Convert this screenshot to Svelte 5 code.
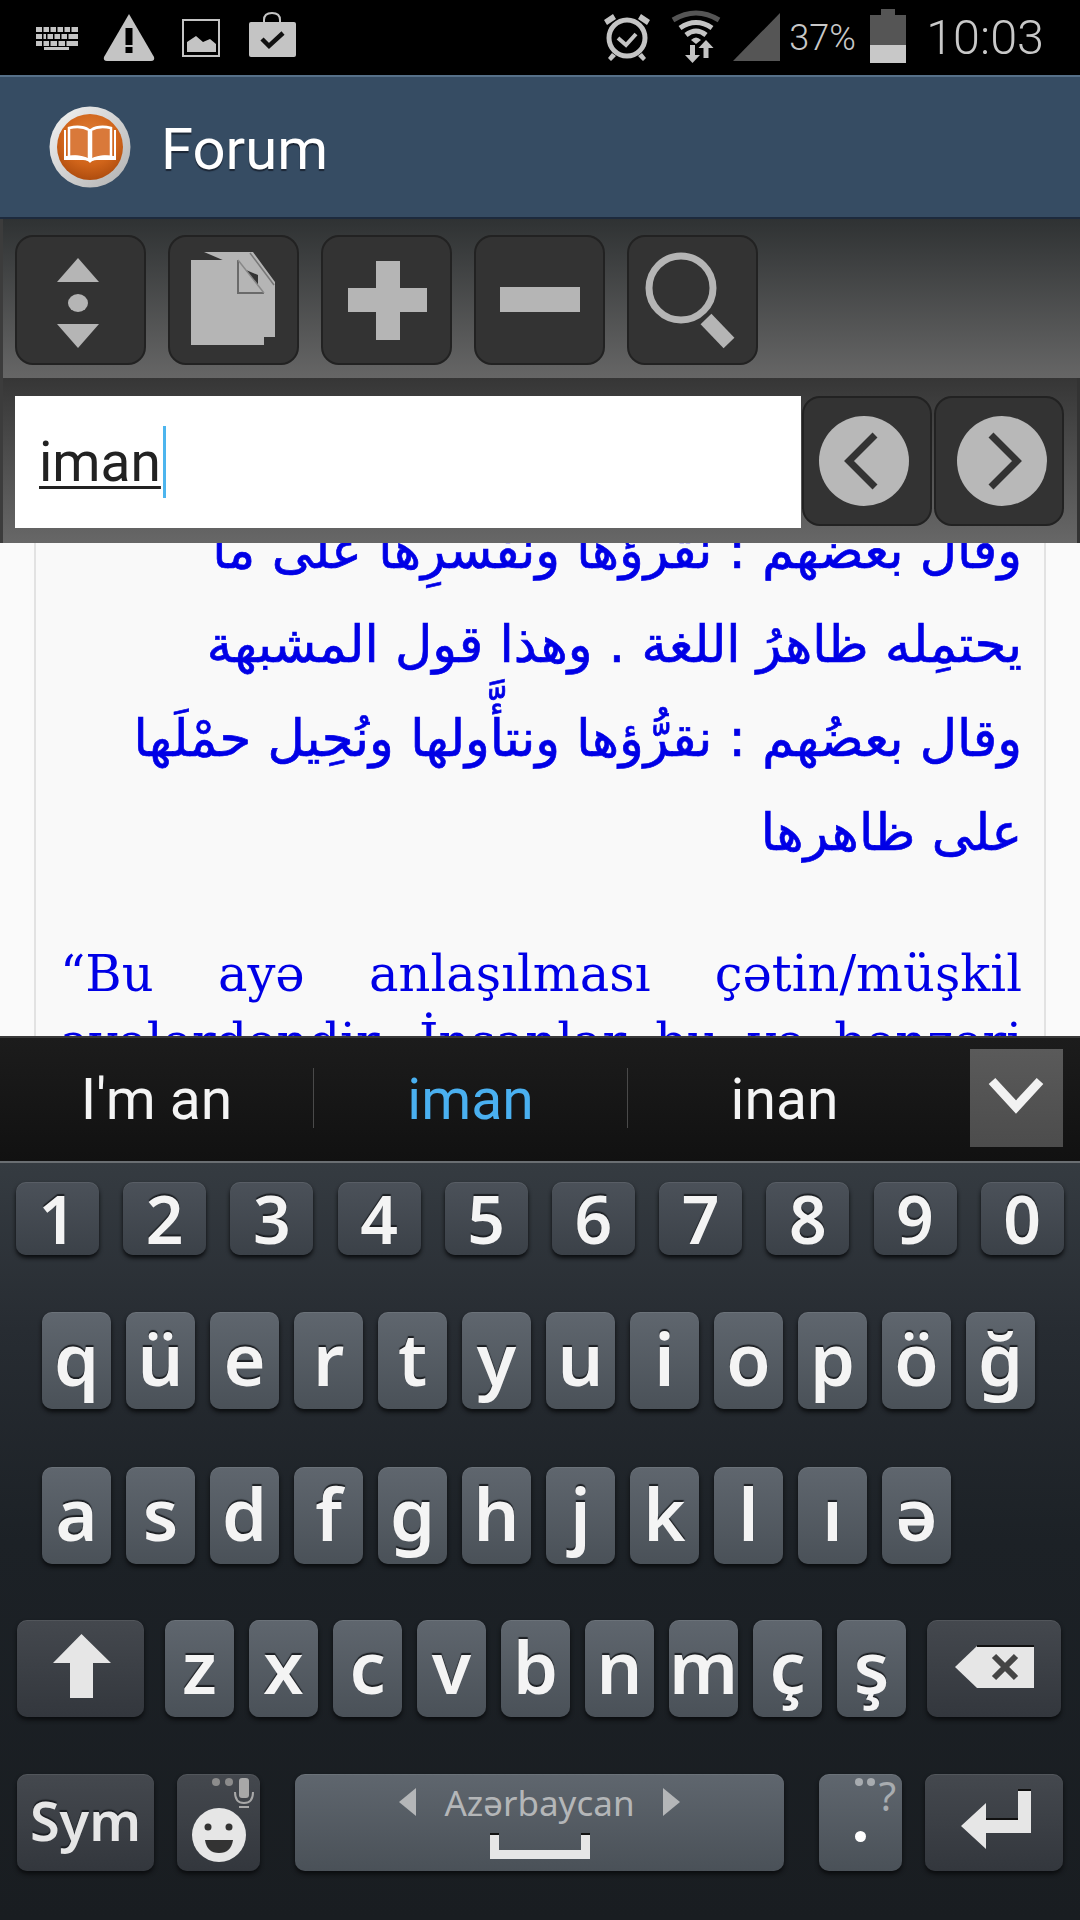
<script>
	const digits = ['1', '2', '3', '4', '5', '6', '7', '8', '9', '0'];
	const row2 = ['q', 'ü', 'e', 'r', 't', 'y', 'u', 'i', 'o', 'p', 'ö', 'ğ'];
	const row3 = ['a', 's', 'd', 'f', 'g', 'h', 'j', 'k', 'l', 'ı', 'ə'];
	const row4 = ['z', 'x', 'c', 'v', 'b', 'n', 'm', 'ç', 'ş'];
	const tools = ['updown', 'copy', 'plus', 'minus', 'search'];
</script>

<div class="phone">
	<div class="status">
		<div class="status-left">
			<svg class="si" width="42" height="75" viewBox="0 0 42 75">
				<g fill="#c4c4c4">
					<path d="M0 27h42v5H0zM0 34h42v5H0zM0 41h42v5H0z" />
					<rect x="8" y="47" width="25" height="3" />
				</g>
				<g fill="#000">
					<path d="M6 27h1.500v19H6zM13 27h1.500v5H13zM20 27h1.500v5H20zM27 27h1.500v5H27zM34 27h1.500v5H34z" />
					<path d="M10 34h1.500v5H10zM17 34h1.500v5H17zM24 34h1.500v5H24zM31 34h1.500v5H31z" />
					<path d="M13 41h1.500v5H13zM21 41h1.500v5H21zM29 41h1.500v5H29z" />
				</g>
			</svg>
			<svg class="si warn" width="52" height="75" viewBox="0 0 52 75">
				<path d="M26 14 51 57q1 4-3 4H4q-4 0-3-4z" fill="#c4c4c4" />
				<rect x="22.500" y="28" width="7" height="17" fill="#000" />
				<rect x="22.500" y="47" width="7" height="6" fill="#000" />
			</svg>
			<svg class="si pic" width="38" height="75" viewBox="0 0 38 75">
				<rect x="1" y="20" width="36" height="36" fill="none" stroke="#c4c4c4" stroke-width="2" />
				<path d="M5 52V42l9-6 7 6 7-3 6 5v8z" fill="#c4c4c4" />
			</svg>
			<svg class="si bag" width="47" height="75" viewBox="0 0 47 75">
				<path d="M2 22h43q2 0 2 2v31q0 2-2 2H2q-2 0-2-2V24q0-2 2-2z" fill="#c4c4c4" />
				<path d="M15 23v-3q0-7 8-7t8 7v3" fill="none" stroke="#c4c4c4" stroke-width="2" />
				<path d="M13 39l7 7 14-13" fill="none" stroke="#111" stroke-width="4.500" />
			</svg>
		</div>
		<div class="status-right">
			<svg class="si" width="48" height="75" viewBox="0 0 48 75">
				<circle cx="24" cy="38" r="18" fill="none" stroke="#c4c4c4" stroke-width="5" />
				<path d="M15 38l8 7 10-11" fill="none" stroke="#c4c4c4" stroke-width="4" />
				<path d="M1 20 10 14 13 19 4 25zM47 20 38 14 35 19 44 25z" fill="#c4c4c4" />
				<path d="M9 53 5 58 8 61 13 56zM39 53 43 58 40 61 35 56z" fill="#c4c4c4" />
			</svg>
			<svg class="si wifi" width="50" height="75" viewBox="0 0 50 75">
				<path d="M2 20Q25 6 48 20" fill="none" stroke="#555" stroke-width="5" />
				<path d="M9 28Q25 17 41 28" fill="none" stroke="#c4c4c4" stroke-width="5" />
				<path d="M15 35Q25 27 35 35" fill="none" stroke="#c4c4c4" stroke-width="5" />
				<path d="M20 40Q25 35 30 40L25 44z" fill="#c4c4c4" />
				<path d="M19 45h5v10h5l-7.500 8-7.500-8h5z" fill="#c4c4c4" />
				<path d="M35 40l7.500 8h-5v10h-5V48h-5z" fill="#c4c4c4" />
			</svg>
			<svg class="si signal" width="47" height="75" viewBox="0 0 47 75">
				<path d="M47 13v48H0z" fill="#555" />
			</svg>
			<span class="pct">37%</span>
			<svg class="si batt" width="36" height="75" viewBox="0 0 36 75">
				<path d="M11 9h14v6h11v48H0V15h11z" fill="#555" />
				<rect y="45" width="36" height="18" fill="#c8c8c8" />
			</svg>
			<span class="time">10:03</span>
		</div>
	</div>

	<header class="appbar">
		<svg class="logo" width="82" height="82" viewBox="0 0 82 82">
			<defs>
				<radialGradient id="orange" cx="50%" cy="35%" r="70%">
					<stop offset="0" stop-color="#e08038" />
					<stop offset="0.6" stop-color="#d0641a" />
					<stop offset="1" stop-color="#a8480c" />
				</radialGradient>
				<linearGradient id="silver" x1="0" y1="0" x2="1" y2="1">
					<stop offset="0" stop-color="#f4f4f4" />
					<stop offset="1" stop-color="#b0b0b0" />
				</linearGradient>
			</defs>
			<circle cx="41" cy="41" r="40.500" fill="url(#silver)" />
			<circle cx="41" cy="41" r="33" fill="url(#orange)" />
			<path d="M20 22q12-3 20 2v30q-9-5-20-3zM62 22q-12-3-20 2v30q9-5 20-3z" fill="#d9793a" stroke="#fff" stroke-width="2.500" />
			<path d="M17 24h-2v30h19q5 0 7 3 2-3 7-3h19V24h-2v26q-14-2-24 4-10-6-24-4z" fill="#fff" />
		</svg>
		<span class="title">Forum</span>
	</header>

	<div class="toolbar">
		{#each tools as t}
			<div class="tbtn">
				{#if t === 'updown'}
					<svg width="131" height="130" viewBox="0 0 131 130" fill="#b5b5b5">
						<path d="M42 47 63 23l21 24z" />
						<ellipse cx="63" cy="68" rx="10" ry="9" />
						<path d="M42 89h42l-21 24z" />
					</svg>
				{:else if t === 'copy'}
					<svg width="131" height="130" viewBox="0 0 131 130">
						<path d="M36 17h49l22 30v55H90V40z" fill="#b5b5b5" />
						<path d="M23 25h47l26 33v52H23z" fill="#b5b5b5" />
						<path d="M70 25v33h26" fill="none" stroke="#6a6a6a" stroke-width="2" />
						<path d="M70 25l26 33" fill="none" stroke="#888" stroke-width="1.500" />
						<path d="M82 18l24 32" fill="none" stroke="#777" stroke-width="1.500" />
					</svg>
				{:else if t === 'plus'}
					<svg width="131" height="130" viewBox="0 0 131 130">
						<path d="M55 26h24v27h27v24H79v28H55V77H27V53h28z" fill="#b5b5b5" />
					</svg>
				{:else if t === 'minus'}
					<svg width="131" height="130" viewBox="0 0 131 130">
						<rect x="26" y="52" width="80" height="25" fill="#b5b5b5" />
					</svg>
				{:else}
					<svg width="131" height="130" viewBox="0 0 131 130">
						<circle cx="54" cy="53" r="32" fill="none" stroke="#b5b5b5" stroke-width="7" />
						<path d="M79 84l23 24" fill="none" stroke="#b5b5b5" stroke-width="15" />
					</svg>
				{/if}
			</div>
		{/each}
	</div>

	<div class="searchrow">
		<div class="field"><span class="typed">iman</span><i class="caret"></i></div>
		<div class="navbtn">
			<svg width="130" height="130" viewBox="0 0 130 130">
				<circle cx="62" cy="65" r="45" fill="#b8b8b8" />
				<path d="M73 39 47 65l26 26" fill="none" stroke="#333" stroke-width="7" />
			</svg>
		</div>
		<div class="navbtn">
			<svg width="130" height="130" viewBox="0 0 130 130">
				<circle cx="68" cy="65" r="45" fill="#b8b8b8" />
				<path d="M57 39l26 26-26 26" fill="none" stroke="#333" stroke-width="7" />
			</svg>
		</div>
	</div>

	<main class="content">
		<article>
			<p class="ar" dir="rtl">وقال بعضهم : نقرؤها ونفسرِها على ما<br />يحتمِله ظاهرُ اللغة . وهذا قول المشبهة<br />وقال بعضُهم : نقرُّؤها ونتأَّولها ونُحِيل حمْلَها<br />على ظاهرها</p>
			<p class="az">“Bu ayə anlaşılması çətin/müşkil ayələrdəndir. İnsanlar bu və bənzəri ayələri anlamaqda çətinlik çəkirlər</p>
		</article>
	</main>

	<div class="suggest">
		<span class="word">I'm an</span>
		<i class="sep"></i>
		<span class="word active">iman</span>
		<i class="sep"></i>
		<span class="word">inan</span>
		<div class="more">
			<svg width="93" height="98" viewBox="0 0 93 98">
				<path d="M22 32l24 26 24-26" fill="none" stroke="#f2f2f2" stroke-width="9" />
			</svg>
		</div>
	</div>

	<div class="keyboard">
		<div class="row digits">
			{#each digits as k}<div class="key num">{k}</div>{/each}
		</div>
		<div class="row letters">
			{#each row2 as k}<div class="key letter">{k}</div>{/each}
		</div>
		<div class="row letters">
			{#each row3 as k}<div class="key letter">{k}</div>{/each}
		</div>
		<div class="row fourth">
			<div class="key fn shift">
				<svg width="128" height="97" viewBox="0 0 128 97">
					<path d="M64.500 14 94 43H76v35H53V43H36z" fill="#e6e6e6" />
				</svg>
			</div>
			<div class="zrow">
				{#each row4 as k}<div class="key letter">{k}</div>{/each}
			</div>
			<div class="key fn back">
				<svg width="134" height="97" viewBox="0 0 134 97">
					<path d="M50 26h57v42H50L28 47z" fill="#e6e6e6" />
					<path d="M50 26h57" stroke="#111" stroke-width="2" />
					<path d="M67 36l22 22M89 36 67 58" stroke="#444" stroke-width="6" fill="none" />
				</svg>
			</div>
		</div>
		<div class="row fifth">
			<div class="key fn sym">Sym</div>
			<div class="key fn emoji">
				<svg width="83" height="97" viewBox="0 0 83 97">
					<circle cx="39" cy="8" r="4" fill="#8c8c8c" />
					<circle cx="52" cy="8" r="4" fill="#8c8c8c" />
					<rect x="62" y="4" width="10" height="20" rx="3" fill="#a8a8a8" />
					<path d="M58 18q0 11 9 11t9-11" fill="none" stroke="#a8a8a8" stroke-width="2" />
					<rect x="62" y="32" width="10" height="2" fill="#a8a8a8" />
					<circle cx="42" cy="61" r="27" fill="#e6e6e6" />
					<circle cx="31" cy="53" r="3.500" fill="#333" />
					<circle cx="52" cy="53" r="3.500" fill="#333" />
					<path d="M28 66h28q-2 13-14 13T28 66z" fill="#333" />
				</svg>
			</div>
			<div class="key letter space">
				<div class="lang">
					<svg width="17" height="28" viewBox="0 0 17 28"><path d="M17 0v28L0 14z" fill="#b4b6b8" /></svg>
					<span>Azərbaycan</span>
					<svg width="17" height="28" viewBox="0 0 17 28"><path d="M0 0v28l17-14z" fill="#b4b6b8" /></svg>
				</div>
				<svg class="bracket" width="100" height="26" viewBox="0 0 100 26">
					<path d="M4.500 2v19.500h91V2" fill="none" stroke="#e6e6e6" stroke-width="9" />
					<path d="M0 1h9M91 1h9" stroke="#111" stroke-width="2" />
				</svg>
			</div>
			<div class="key letter dot">
				<div class="alt"><b></b><b></b><span>?</span></div>
				<b class="period"></b>
			</div>
			<div class="key fn enter">
				<svg width="138" height="97" viewBox="0 0 138 97">
					<path d="M36 52 61 29v16h32V16h13v43H61v16z" fill="#e6e6e6" />
					<path d="M93 16h13" stroke="#111" stroke-width="2" />
					<path d="M61 45h32" stroke="#111" stroke-width="2" />
				</svg>
			</div>
		</div>
	</div>
</div>

<style>
	:global(body) {
		margin: 0;
		background: #000;
	}

	.phone {
		width: 1080px;
		height: 1920px;
		display: flex;
		flex-direction: column;
		overflow: hidden;
		font-family: Roboto, sans-serif;
	}

	.phone > * {
		flex: none;
	}

	svg {
		display: block;
		flex: none;
	}

	/* status bar */
	.status {
		height: 75px;
		background: #000;
		display: flex;
		justify-content: space-between;
		padding: 0 36px;
		color: #c8c8c8;
	}

	.status-left,
	.status-right {
		display: flex;
		align-items: center;
	}

	.warn {
		margin-left: 25px;
	}

	.pic {
		margin-left: 27px;
	}

	.bag {
		margin-left: 29px;
	}

	.wifi {
		margin-left: 20px;
	}

	.signal {
		margin-left: 12px;
	}

	.pct {
		margin-left: 9px;
		font-size: 36px;
		font-weight: 300;
		width: 65px;
		white-space: nowrap;
	}

	.batt {
		margin-left: 16px;
	}

	.time {
		margin-left: 20px;
		font-size: 48.500px;
		font-weight: 300;
		white-space: nowrap;
	}

	/* action bar */
	.appbar {
		height: 140px;
		background: #364c63;
		border-top: 2px solid #567089;
		border-bottom: 2px solid #1d2a3d;
		display: flex;
		align-items: center;
		padding-left: 49px;
		gap: 30px;
	}

	.title {
		color: #fff;
		font-size: 58px;
		font-weight: 400;
		margin-top: 4px;
		text-shadow: 0 2px 1px #1b2635;
	}

	/* tools */
	.toolbar {
		height: 159px;
		box-sizing: border-box;
		background: linear-gradient(#2f3233, #666);
		border-left: 3px solid #3c3c3c;
		padding: 16px 0 0 12px;
		display: flex;
		gap: 22px;
	}

	.tbtn,
	.navbtn {
		width: 131px;
		height: 130px;
		box-sizing: border-box;
		background: #333;
		border: 2px solid #222;
		border-radius: 18px;
		flex: none;
	}

	.navbtn {
		width: 130px;
	}

	.tbtn svg,
	.navbtn svg {
		margin: -2px;
	}

	.searchrow {
		height: 165px;
		box-sizing: border-box;
		background: linear-gradient(#363636, #676767);
		border-left: 3px solid #3c3c3c;
		border-right: 3px solid #333;
		padding: 18px 0 0 12px;
		display: flex;
		align-items: flex-start;
		gap: 2px;
	}

	.field {
		width: 786px;
		height: 132px;
		background: #fff;
		display: flex;
		align-items: center;
		padding-left: 24px;
		box-sizing: border-box;
		margin-right: -1px;
	}

	.typed {
		color: #222;
		font-size: 55px;
		font-weight: 400;
		line-height: 66px;
		text-decoration: underline;
		text-decoration-thickness: 3px;
		text-underline-offset: 5px;
	}

	.caret {
		width: 3px;
		height: 72px;
		background: #4db5ee;
		margin-left: 2px;
	}

	/* page */
	.content {
		height: 493px;
		background: #fafafa;
		overflow: hidden;
	}

	article {
		width: 1012px;
		margin: -62px 0 0 34px;
		box-sizing: border-box;
		border: solid #e2e2e2;
		border-width: 0 2px;
		padding: 22px 22px 0 24px;
		background: #f9f9f9;
		color: #0000e6;
	}

	p {
		margin: 0;
	}

	.ar {
		font-family: 'DejaVu Sans', sans-serif;
		font-size: 51.300px;
		line-height: 94px;
		white-space: nowrap;
		-webkit-text-stroke: 0.7px #0000e6;
	}

	.az {
		margin-top: 61px;
		font-family: 'DejaVu Serif', serif;
		font-size: 49.500px;
		line-height: 68px;
		text-align: justify;
	}

	/* suggestions */
	.suggest {
		height: 125px;
		box-sizing: border-box;
		border-top: 2px solid #3a3a3a;
		background: linear-gradient(#1c1c1c, #111);
		display: flex;
		align-items: center;
	}

	.word {
		width: 313px;
		text-align: center;
		color: #f4f4f4;
		font-size: 57px;
		font-weight: 400;
		white-space: nowrap;
	}

	.word.active {
		color: #4ab0f0;
	}

	.sep {
		width: 1px;
		height: 60px;
		margin-top: -4px;
		background: #4a4a4a;
		flex: none;
	}

	.more {
		margin: -4px 0 0 29px;
		width: 93px;
		height: 98px;
		background: linear-gradient(#5a5a5a, #4c4c4c);
	}

	/* keyboard */
	.phone > .keyboard {
		flex: 1;
		min-height: 0;
		border-top: 2px solid #6a6e72;
		padding: 19px 0 0;
		background: linear-gradient(#353b41, #272c32 22%, #1c2126 50%, #191d21);
	}

	.row {
		display: flex;
		margin-bottom: 57px;
	}

	.digits {
		padding-left: 16px;
		gap: 24.200px;
	}

	.letters {
		padding-left: 42px;
		gap: 15px;
		margin-bottom: 58px;
	}

	.letters + .fourth {
		margin-top: -2px;
	}

	.fourth {
		padding-left: 17px;
	}

	.zrow {
		display: flex;
		gap: 15px;
		margin: 0 21px;
	}

	.fifth {
		padding-left: 17px;
	}

	.key {
		height: 97px;
		box-sizing: border-box;
		border-radius: 10px;
		display: flex;
		align-items: center;
		justify-content: center;
		flex: none;
		box-shadow:
			inset 0 1px 0 rgba(255, 255, 255, 0.08),
			0 3px 4px #0a0c0e;
		color: #f4f4f4;
		font-family: 'Noto Sans', sans-serif;
		font-weight: 600;
		text-shadow: 0 -2px 1px #1c1f23;
	}

	.num {
		width: 83px;
		height: 73px;
		font-size: 66px;
		padding-bottom: 2px;
		background: linear-gradient(#4b5159, #3b4148);
	}

	.letter {
		width: 69px;
		font-size: 72px;
		padding-bottom: 6px;
		background: linear-gradient(#5f666e, #4a5158);
	}

	.fn {
		background: linear-gradient(#44484e, #33373d);
	}

	.shift {
		width: 127px;
	}

	.back {
		width: 134px;
	}

	.sym {
		width: 137px;
		margin-right: 23px;
		font-size: 54px;
		padding-bottom: 6px;
		color: #e6e6e6;
	}

	.emoji {
		width: 83px;
		margin-right: 35px;
	}

	.space {
		width: 489px;
		margin-right: 35px;
		padding-bottom: 0;
		flex-direction: column;
		justify-content: flex-start;
	}

	.lang {
		display: flex;
		align-items: center;
		gap: 28px;
		height: 56px;
		color: #b4b6b8;
		font-size: 35px;
		font-weight: 400;
		text-shadow: none;
	}

	.bracket {
		margin-top: 3px;
	}

	.dot {
		width: 83px;
		margin-right: 23px;
		padding-bottom: 0;
		position: relative;
	}

	.alt {
		position: absolute;
		top: 0;
		right: 6px;
		display: flex;
		align-items: flex-start;
		gap: 4px;
		color: #a8acb0;
		font-size: 40px;
		line-height: 44px;
		font-weight: 400;
		text-shadow: none;
	}

	.alt b {
		width: 8px;
		height: 8px;
		border-radius: 50%;
		background: #a8acb0;
		margin-top: 4px;
	}

	.period {
		width: 11px;
		height: 11px;
		border-radius: 50%;
		background: #fff;
		margin-top: 28px;
	}

	.enter {
		width: 138px;
	}
</style>
